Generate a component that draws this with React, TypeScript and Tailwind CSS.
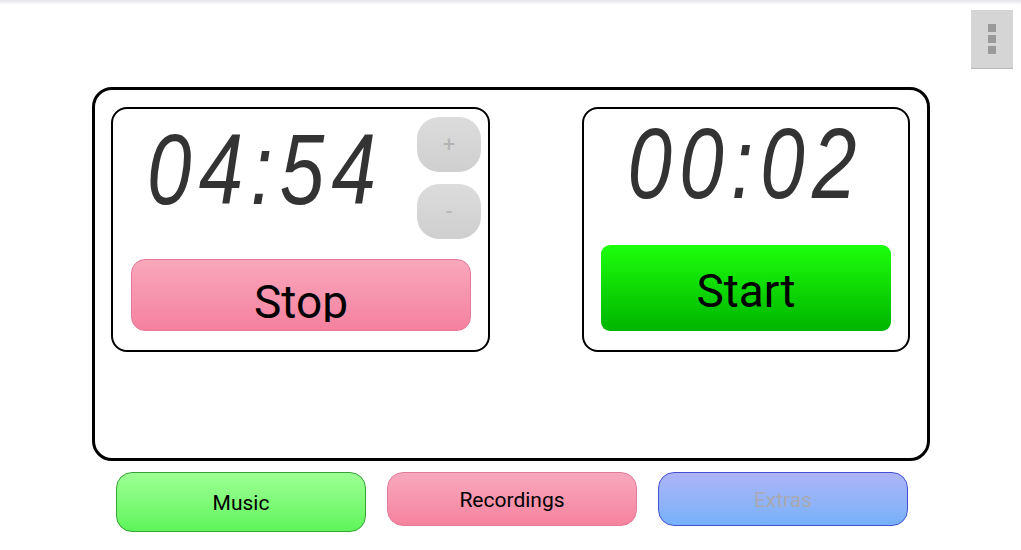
import React from 'react';

const digitFont = { fontFamily: '"Liberation Sans", Arimo, sans-serif' };
const uiFont = { fontFamily: 'Roboto, "Liberation Sans", sans-serif' };

function Digits({ value, origin }: { value: string; origin: string }) {
  return (
    <div
      className={`inline-block text-[100px] leading-none italic text-[#333] tracking-[9px] scale-x-[0.8] ${origin}`}
      style={digitFont}
    >
      {value}
    </div>
  );
}

function StepButton({ label }: { label: string }) {
  return (
    <div className="w-[64px] h-[55px] rounded-[22px] bg-gradient-to-b from-[#dcdcdc] to-[#cfcfcf] flex items-center justify-center text-[#b3b3b3] text-[22px] leading-none">
      {label}
    </div>
  );
}

function BottomButton({ label, className, textClass }: { label: string; className: string; textClass?: string }) {
  return (
    <div className={`w-[250px] rounded-[16px] border flex items-center justify-center pt-[4px] text-[21px] ${className}`}>
      <span className={textClass ?? 'text-black'}>{label}</span>
    </div>
  );
}

export default function App() {
  return (
    <div className="relative w-[1021px] h-[550px] overflow-hidden bg-white" style={uiFont}>
      <div className="h-[5px] bg-gradient-to-b from-[#e6e2ec] to-white" />

      {/* overflow menu */}
      <div className="absolute left-[971px] top-[10px] w-[42px] h-[59px] bg-[#d5d5d5] border-b border-[#b8b8b8] flex flex-col items-center justify-center gap-[3px]">
        <div className="w-[8px] h-[8px] bg-[#9a9a9a]" />
        <div className="w-[8px] h-[8px] bg-[#9a9a9a]" />
        <div className="w-[8px] h-[8px] bg-[#9a9a9a]" />
      </div>

      <div className="mt-[82px] ml-[92px] w-[838px] h-[374px] border-[3px] border-black rounded-[20px] pl-[16px] pr-[17px] pt-[17px] flex justify-between items-start">
        {/* countdown */}
        <div className="w-[379px] h-[245px] border-2 border-black rounded-[16px] pt-[8px]">
          <div className="flex h-[122px]">
            <div className="pl-[34px] w-[304px] pt-[2px]">
              <Digits value="04:54" origin="origin-left" />
            </div>
            <div className="flex flex-col gap-[12px]">
              <StepButton label="+" />
              <StepButton label="-" />
            </div>
          </div>
          <div className="mt-[20px] ml-[18px] w-[340px] h-[72px] rounded-[14px] border border-[#e57a98] bg-gradient-to-b from-[#f8a7bb] to-[#f5819f] flex justify-center">
            <div className="mt-[19px] h-[43px] overflow-hidden text-[46px] leading-none text-black">Stop</div>
          </div>
        </div>

        {/* stopwatch */}
        <div className="w-[328px] h-[245px] border-2 border-black rounded-[16px] pt-[4px] flex flex-col items-center">
          <div className="h-[115px] flex justify-center">
            <Digits value="00:02" origin="origin-center" />
          </div>
          <div className="mt-[17px] w-[290px] h-[86px] rounded-[9px] bg-gradient-to-b from-[#1cff0c] to-[#00b500] flex items-center justify-center pt-[6px]">
            <span className="text-[46px] leading-none text-black">Start</span>
          </div>
        </div>
      </div>

      <div className="mt-[11px] ml-[116px] flex gap-[21px] items-start">
        <BottomButton label="Music" className="h-[60px] border-[#35a335] bg-gradient-to-b from-[#9cff94] to-[#5ef45a]" />
        <BottomButton label="Recordings" className="h-[54px] border-[#e27c98] bg-gradient-to-b from-[#f8a9bd] to-[#f5829f]" />
        <BottomButton
          label="Extras"
          className="h-[54px] border-[#4252d2] bg-gradient-to-b from-[#adb4f7] to-[#76b1f9]"
          textClass="text-[#a9a9b3]"
        />
      </div>
    </div>
  );
}
